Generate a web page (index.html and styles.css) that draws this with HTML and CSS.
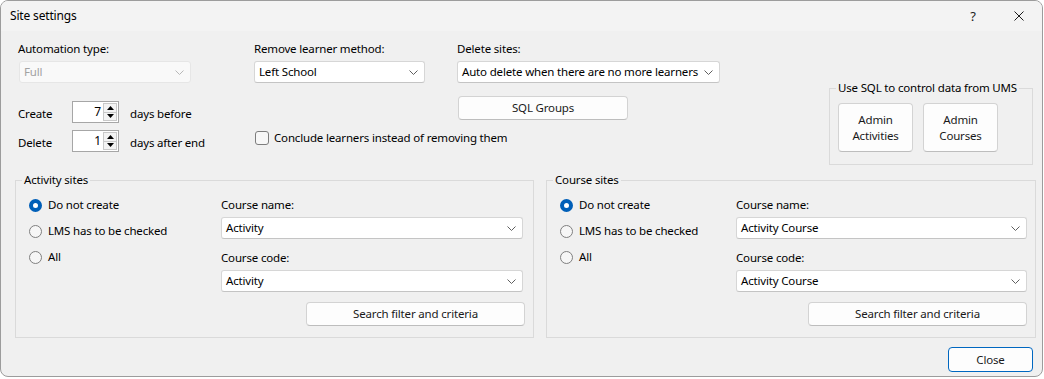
FILE: index.html
```html
<!DOCTYPE html>
<html lang="en">
<head>
<meta charset="utf-8">
<title>Site settings</title>
<link rel="stylesheet" href="styles.css">
</head>
<body>
<div class="window">
  <div class="titlebar">
    <span class="title">Site settings</span>
    <div class="title-btns">
      <span class="tbtn help">?</span>
      <span class="tbtn closex"><svg width="10" height="10" viewBox="0 0 10 10"><path d="M0.5 0.5 L9.5 9.5 M9.5 0.5 L0.5 9.5" stroke="#1b1b1b" stroke-width="1" fill="none"/></svg></span>
    </div>
  </div>
  <div class="content">
    <div class="top">
      <div class="col col-auto">
        <span class="lbl">Automation type:</span>
        <div class="combo combo-auto disabled"><span>Full</span><svg class="chev" width="9" height="5" viewBox="0 0 9 5"><path d="M0.5 0.5 L4.5 4.5 L8.5 0.5" fill="none" stroke="#b8b8b8"/></svg></div>
        <div class="spin-row first">
          <span class="spin-lbl">Create</span>
          <div class="spin"><span class="spin-val">7</span><div class="arrows"><span class="arr"><svg width="7" height="4" viewBox="0 0 7 4"><path d="M0 4 L3.5 0 L7 4Z" fill="#000"/></svg></span><span class="arr"><svg width="7" height="4" viewBox="0 0 7 4"><path d="M0 0 L3.5 4 L7 0Z" fill="#000"/></svg></span></div></div>
          <span class="spin-after">days before</span>
        </div>
        <div class="spin-row">
          <span class="spin-lbl">Delete</span>
          <div class="spin"><span class="spin-val">1</span><div class="arrows"><span class="arr"><svg width="7" height="4" viewBox="0 0 7 4"><path d="M0 4 L3.5 0 L7 4Z" fill="#000"/></svg></span><span class="arr"><svg width="7" height="4" viewBox="0 0 7 4"><path d="M0 0 L3.5 4 L7 0Z" fill="#000"/></svg></span></div></div>
          <span class="spin-after">days after end</span>
        </div>
      </div>
      <div class="col col-remove">
        <span class="lbl">Remove learner method:</span>
        <div class="combo combo-remove"><span>Left School</span><svg class="chev" width="9" height="5" viewBox="0 0 9 5"><path d="M0.5 0.5 L4.5 4.5 L8.5 0.5" fill="none" stroke="#5f5f5f"/></svg></div>
        <div class="check-row"><span class="checkbox"></span><span>Conclude learners instead of removing them</span></div>
      </div>
      <div class="col col-delete">
        <span class="lbl">Delete sites:</span>
        <div class="combo combo-delete"><span>Auto delete when there are no more learners</span><svg class="chev" width="9" height="5" viewBox="0 0 9 5"><path d="M0.5 0.5 L4.5 4.5 L8.5 0.5" fill="none" stroke="#5f5f5f"/></svg></div>
        <div class="btn btn-sql">SQL Groups</div>
      </div>
      <fieldset class="group sql-group">
        <legend>Use SQL to control data from UMS</legend>
        <div class="sql-btns">
          <div class="btn btn-admin">Admin<br>Activities</div>
          <div class="btn btn-admin">Admin<br>Courses</div>
        </div>
      </fieldset>
    </div>
    <div class="groups">
      <fieldset class="group site-group activity">
        <legend>Activity sites</legend>
        <div class="site-inner">
          <div class="radios">
            <div class="radio-row"><span class="radio on"></span><span>Do not create</span></div>
            <div class="radio-row"><span class="radio"></span><span>LMS has to be checked</span></div>
            <div class="radio-row"><span class="radio"></span><span>All</span></div>
          </div>
          <div class="fields">
            <span class="lbl">Course name:</span>
            <div class="combo combo-full"><span>Activity</span><svg class="chev" width="9" height="5" viewBox="0 0 9 5"><path d="M0.5 0.5 L4.5 4.5 L8.5 0.5" fill="none" stroke="#5f5f5f"/></svg></div>
            <span class="lbl lbl-gap">Course code:</span>
            <div class="combo combo-full"><span>Activity</span><svg class="chev" width="9" height="5" viewBox="0 0 9 5"><path d="M0.5 0.5 L4.5 4.5 L8.5 0.5" fill="none" stroke="#5f5f5f"/></svg></div>
            <div class="btn btn-search">Search filter and criteria</div>
          </div>
        </div>
      </fieldset>
      <fieldset class="group site-group course">
        <legend>Course sites</legend>
        <div class="site-inner">
          <div class="radios">
            <div class="radio-row"><span class="radio on"></span><span>Do not create</span></div>
            <div class="radio-row"><span class="radio"></span><span>LMS has to be checked</span></div>
            <div class="radio-row"><span class="radio"></span><span>All</span></div>
          </div>
          <div class="fields">
            <span class="lbl">Course name:</span>
            <div class="combo combo-full"><span>Activity Course</span><svg class="chev" width="9" height="5" viewBox="0 0 9 5"><path d="M0.5 0.5 L4.5 4.5 L8.5 0.5" fill="none" stroke="#5f5f5f"/></svg></div>
            <span class="lbl lbl-gap">Course code:</span>
            <div class="combo combo-full"><span>Activity Course</span><svg class="chev" width="9" height="5" viewBox="0 0 9 5"><path d="M0.5 0.5 L4.5 4.5 L8.5 0.5" fill="none" stroke="#5f5f5f"/></svg></div>
            <div class="btn btn-search">Search filter and criteria</div>
          </div>
        </div>
      </fieldset>
    </div>
    <div class="footer">
      <div class="btn btn-close">Close</div>
    </div>
  </div>
</div>
</body>
</html>
```

FILE: styles.css
```css
html, body {
  margin: 0;
  padding: 0;
  background: #ffffff;
}
body {
  font-family: "Noto Sans", "Open Sans", sans-serif;
  font-size: 11.5px;
  letter-spacing: -0.17px;
  line-height: 16px;
  color: #000;
}
.window {
  box-sizing: border-box;
  width: 1043px;
  height: 377px;
  border: 1px solid #9c9c9c;
  border-radius: 8px;
  background: #f0f0f0;
  overflow: hidden;
}
.titlebar {
  height: 30px;
  background: #f3f3f3;
  display: flex;
  align-items: center;
  justify-content: space-between;
  padding-left: 9px;
  font-size: 12px;
}
.title-btns {
  display: flex;
  height: 100%;
}
.tbtn {
  width: 46px;
  height: 100%;
  display: flex;
  align-items: center;
  justify-content: center;
}
.help {
  font-size: 13px;
  color: #1b1b1b;
}
.content {
  padding: 10px 6px 0 14px;
}
.top {
  display: flex;
  align-items: flex-start;
  padding-left: 3px;
  height: 124px;
}
.col {
  display: flex;
  flex-direction: column;
  align-items: flex-start;
}
.col-auto { width: 236px; }
.col-remove { width: 203px; }
.col-delete { width: 372px; }
.lbl { display: block; white-space: nowrap; }
.combo {
  box-sizing: border-box;
  height: 22px;
  margin-top: 4px;
  border: 1px solid #d6d6d6;
  border-bottom-color: #c4c4c4;
  border-radius: 3px;
  background: #fff;
  display: flex;
  align-items: center;
  justify-content: space-between;
  padding: 0 6px 0 4px;
  white-space: nowrap;
}
.combo.disabled {
  background: #f9f9f9;
  border-color: #e6e6e6;
  color: #a2a2a2;
}
.combo-auto { width: 172px; margin-left: 1px; }
.combo-remove { width: 171px; }
.combo-delete { width: 263px; }
.combo-full { width: 100%; }
.chev { flex: none; }
.spin-row {
  display: flex;
  align-items: center;
  margin-top: 7px;
}
.spin-row.first { margin-top: 18px; }
.spin-lbl { width: 54px; padding-top: 3px; }
.spin-after { margin-left: 11px; padding-top: 3px; }
.spin {
  box-sizing: border-box;
  width: 47px;
  height: 22px;
  border: 1px solid #a6a6a6;
  background: #fff;
  display: flex;
  align-items: stretch;
  justify-content: flex-end;
  padding: 1px;
}
.spin-val {
  align-self: center;
  padding-right: 2px;
  font-size: 12px;
}
.arrows {
  width: 14px;
  display: flex;
  flex-direction: column;
}
.arr {
  flex: 1;
  box-sizing: border-box;
  border: 1px solid #c9c9c9;
  background: #f3f3f3;
  display: flex;
  align-items: center;
  justify-content: center;
}
.arr + .arr { border-top: none; }
.check-row {
  display: flex;
  align-items: center;
  white-space: nowrap;
  margin-top: 47px;
  margin-left: 1px;
}
.checkbox {
  box-sizing: border-box;
  width: 14px;
  height: 14px;
  border: 1px solid #7d7d7d;
  border-radius: 3px;
  background: #f7f7f7;
  margin-right: 5px;
}
.btn {
  box-sizing: border-box;
  background: #fdfdfd;
  border: 1px solid #d3d3d3;
  border-bottom-color: #bdbdbd;
  border-radius: 4px;
  display: flex;
  align-items: center;
  justify-content: center;
  text-align: center;
  color: #1a1a1a;
}
.btn-sql {
  width: 170px;
  height: 24px;
  margin-top: 13px;
  margin-left: 1px;
}
.group {
  margin: 0;
  border: 1px solid #dadada;
  min-width: 0;
  box-sizing: border-box;
}
.group legend {
  padding: 0 2px;
  line-height: 16px;
  white-space: nowrap;
}
.sql-group {
  width: 204px;
  margin-top: 39px;
  padding: 7px 6px 12px 6px;
}
.sql-btns {
  display: flex;
  gap: 10px;
  margin-left: 2px;
}
.btn-admin {
  width: 75px;
  height: 49px;
}
.groups {
  display: flex;
  gap: 12px;
  margin-top: 7px;
}
.site-group {
  padding: 9px 10px 11px 6px;
}
.activity { width: 519px; }
.course { width: 490px; padding-right: 8px; }
.site-inner {
  display: flex;
}
.radios {
  flex: 1;
  display: flex;
  flex-direction: column;
  gap: 10px;
  padding-left: 7px;
}
.radio-row {
  display: flex;
  align-items: center;
  gap: 6px;
  white-space: nowrap;
}
.radio {
  box-sizing: border-box;
  width: 13px;
  height: 13px;
  border-radius: 50%;
  border: 1px solid #7f7f7f;
  background: #f6f6f6;
}
.radio.on {
  border: 4px solid #005fb8;
  background: #ffffff;
}
.fields {
  display: flex;
  flex-direction: column;
  align-items: flex-end;
}
.fields .lbl { align-self: flex-start; }
.activity .fields { width: 302px; }
.course .fields { width: 291px; }
.lbl-gap { margin-top: 11px; }
.btn-search {
  width: 219px;
  height: 24px;
  margin-top: 10px;
}
.activity .btn-search { margin-right: -2px; }
.footer {
  display: flex;
  justify-content: flex-end;
  margin-top: 9px;
  padding-right: 3px;
}
.btn-close {
  width: 85px;
  height: 25px;
  border: 1px solid #0067c0;
}
```
